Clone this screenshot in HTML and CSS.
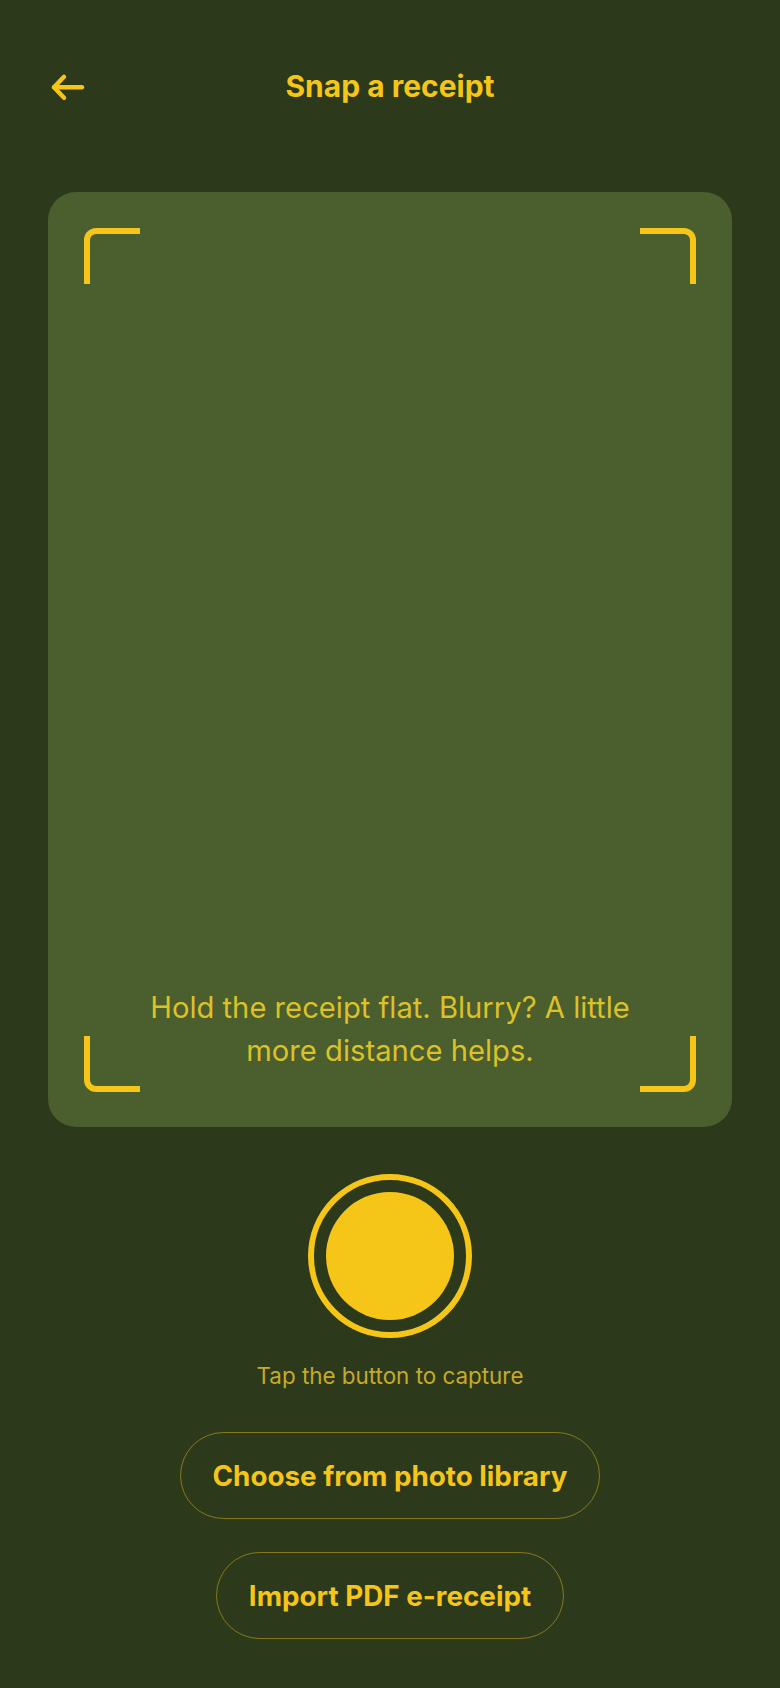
FILE: index.html
```html
<!DOCTYPE html>
<html lang="en">
<head>
<meta charset="utf-8">
<meta name="viewport" content="width=device-width, initial-scale=1">
<title>Snap a receipt</title>
<link rel="stylesheet" href="styles.css">
</head>
<body>
<main class="screen">
  <header class="topbar">
    <button class="back" aria-label="Back">
      <svg width="40" height="28" viewBox="0 0 40 28" fill="none" stroke="currentColor" stroke-width="4.4" stroke-linecap="round" stroke-linejoin="round">
        <path d="M34 14.3H6"/>
        <path d="M16 3.8L6 14.3l10 10.5"/>
      </svg>
    </button>
    <h1 class="title">Snap a receipt</h1>
    <span class="spacer"></span>
  </header>

  <section class="viewfinder">
    <svg class="corner corner-tl" width="56" height="56" viewBox="0 0 56 56" fill="none" stroke="currentColor" stroke-width="6"><path d="M3 56V12a9 9 0 0 1 9-9h44"/></svg>
    <svg class="corner corner-tr" width="56" height="56" viewBox="0 0 56 56" fill="none" stroke="currentColor" stroke-width="6"><path d="M0 3h44a9 9 0 0 1 9 9v44"/></svg>
    <svg class="corner corner-bl" width="56" height="56" viewBox="0 0 56 56" fill="none" stroke="currentColor" stroke-width="6"><path d="M3 0v44a9 9 0 0 0 9 9h44"/></svg>
    <svg class="corner corner-br" width="56" height="56" viewBox="0 0 56 56" fill="none" stroke="currentColor" stroke-width="6"><path d="M53 0v44a9 9 0 0 1-9 9H0"/></svg>
    <p class="hint">Hold the receipt flat. Blurry? A little more distance helps.</p>
  </section>

  <div class="capture-area">
    <button class="shutter" aria-label="Capture"><span class="shutter-core"></span></button>
    <p class="capture-label">Tap the button to capture</p>
  </div>

  <div class="actions">
    <button class="pill">Choose from photo library</button>
    <button class="pill">Import PDF e-receipt</button>
  </div>
</main>
</body>
</html>
```

FILE: styles.css
```css
* { box-sizing: border-box; }

html, body {
  margin: 0;
  padding: 0;
  background: #2c391b;
}

body {
  font-family: Inter, "Noto Sans", "Liberation Sans", sans-serif;
  color: #f5c518;
}

.screen {
  width: 780px;
  min-height: 1688px;
  padding: 58px 48px 0;
  display: flex;
  flex-direction: column;
  align-items: stretch;
}

.topbar {
  height: 56px;
  display: grid;
  grid-template-columns: 44px 1fr 44px;
  align-items: center;
}

.back {
  background: none;
  border: 0;
  padding: 0;
  color: #f5c518;
  display: flex;
  align-items: center;
  height: 56px;
  cursor: pointer;
}

.back svg { display: block; margin-top: 1px; }

.title {
  margin: 0;
  text-align: center;
  font-size: 30px;
  font-weight: 700;
  line-height: 36px;
  color: #f5c518;
}

.viewfinder {
  position: relative;
  margin-top: 78px;
  height: 935px;
  border-radius: 28px;
  background: #4b5e2e;
  color: #f5c518;
  display: flex;
  flex-direction: column;
  justify-content: flex-end;
  align-items: center;
  padding: 0 36px 54px;
}

.corner {
  position: absolute;
  display: block;
}
.corner-tl { top: 36px; left: 36px; }
.corner-tr { top: 36px; right: 36px; }
.corner-bl { bottom: 35px; left: 36px; }
.corner-br { bottom: 35px; right: 36px; }

.hint {
  margin: 0;
  max-width: 520px;
  text-align: center;
  font-size: 29.2px;
  line-height: 43.7px;
  font-weight: 400;
  color: #dcc128;
}

.capture-area {
  margin-top: 47px;
  display: flex;
  flex-direction: column;
  align-items: center;
}

.shutter {
  width: 164px;
  height: 164px;
  border-radius: 50%;
  border: 6px solid #f5c518;
  background: transparent;
  padding: 12px;
  display: flex;
  cursor: pointer;
}

.shutter-core {
  flex: 1;
  border-radius: 50%;
  background: #f5c518;
}

.capture-label {
  margin: 24px 0 0;
  font-size: 22.4px;
  line-height: 28px;
  color: #c6aa2b;
}

.actions {
  margin-top: 42px;
  display: flex;
  flex-direction: column;
  align-items: center;
  gap: 33px;
}

.pill {
  height: 87px;
  padding: 0 32px;
  border-radius: 44px;
  border: 1.5px solid rgba(245, 197, 24, 0.45);
  background: transparent;
  color: #f5c518;
  font-family: Inter, "Noto Sans", "Liberation Sans", sans-serif;
  font-size: 27.8px;
  font-weight: 700;
  cursor: pointer;
}
```
